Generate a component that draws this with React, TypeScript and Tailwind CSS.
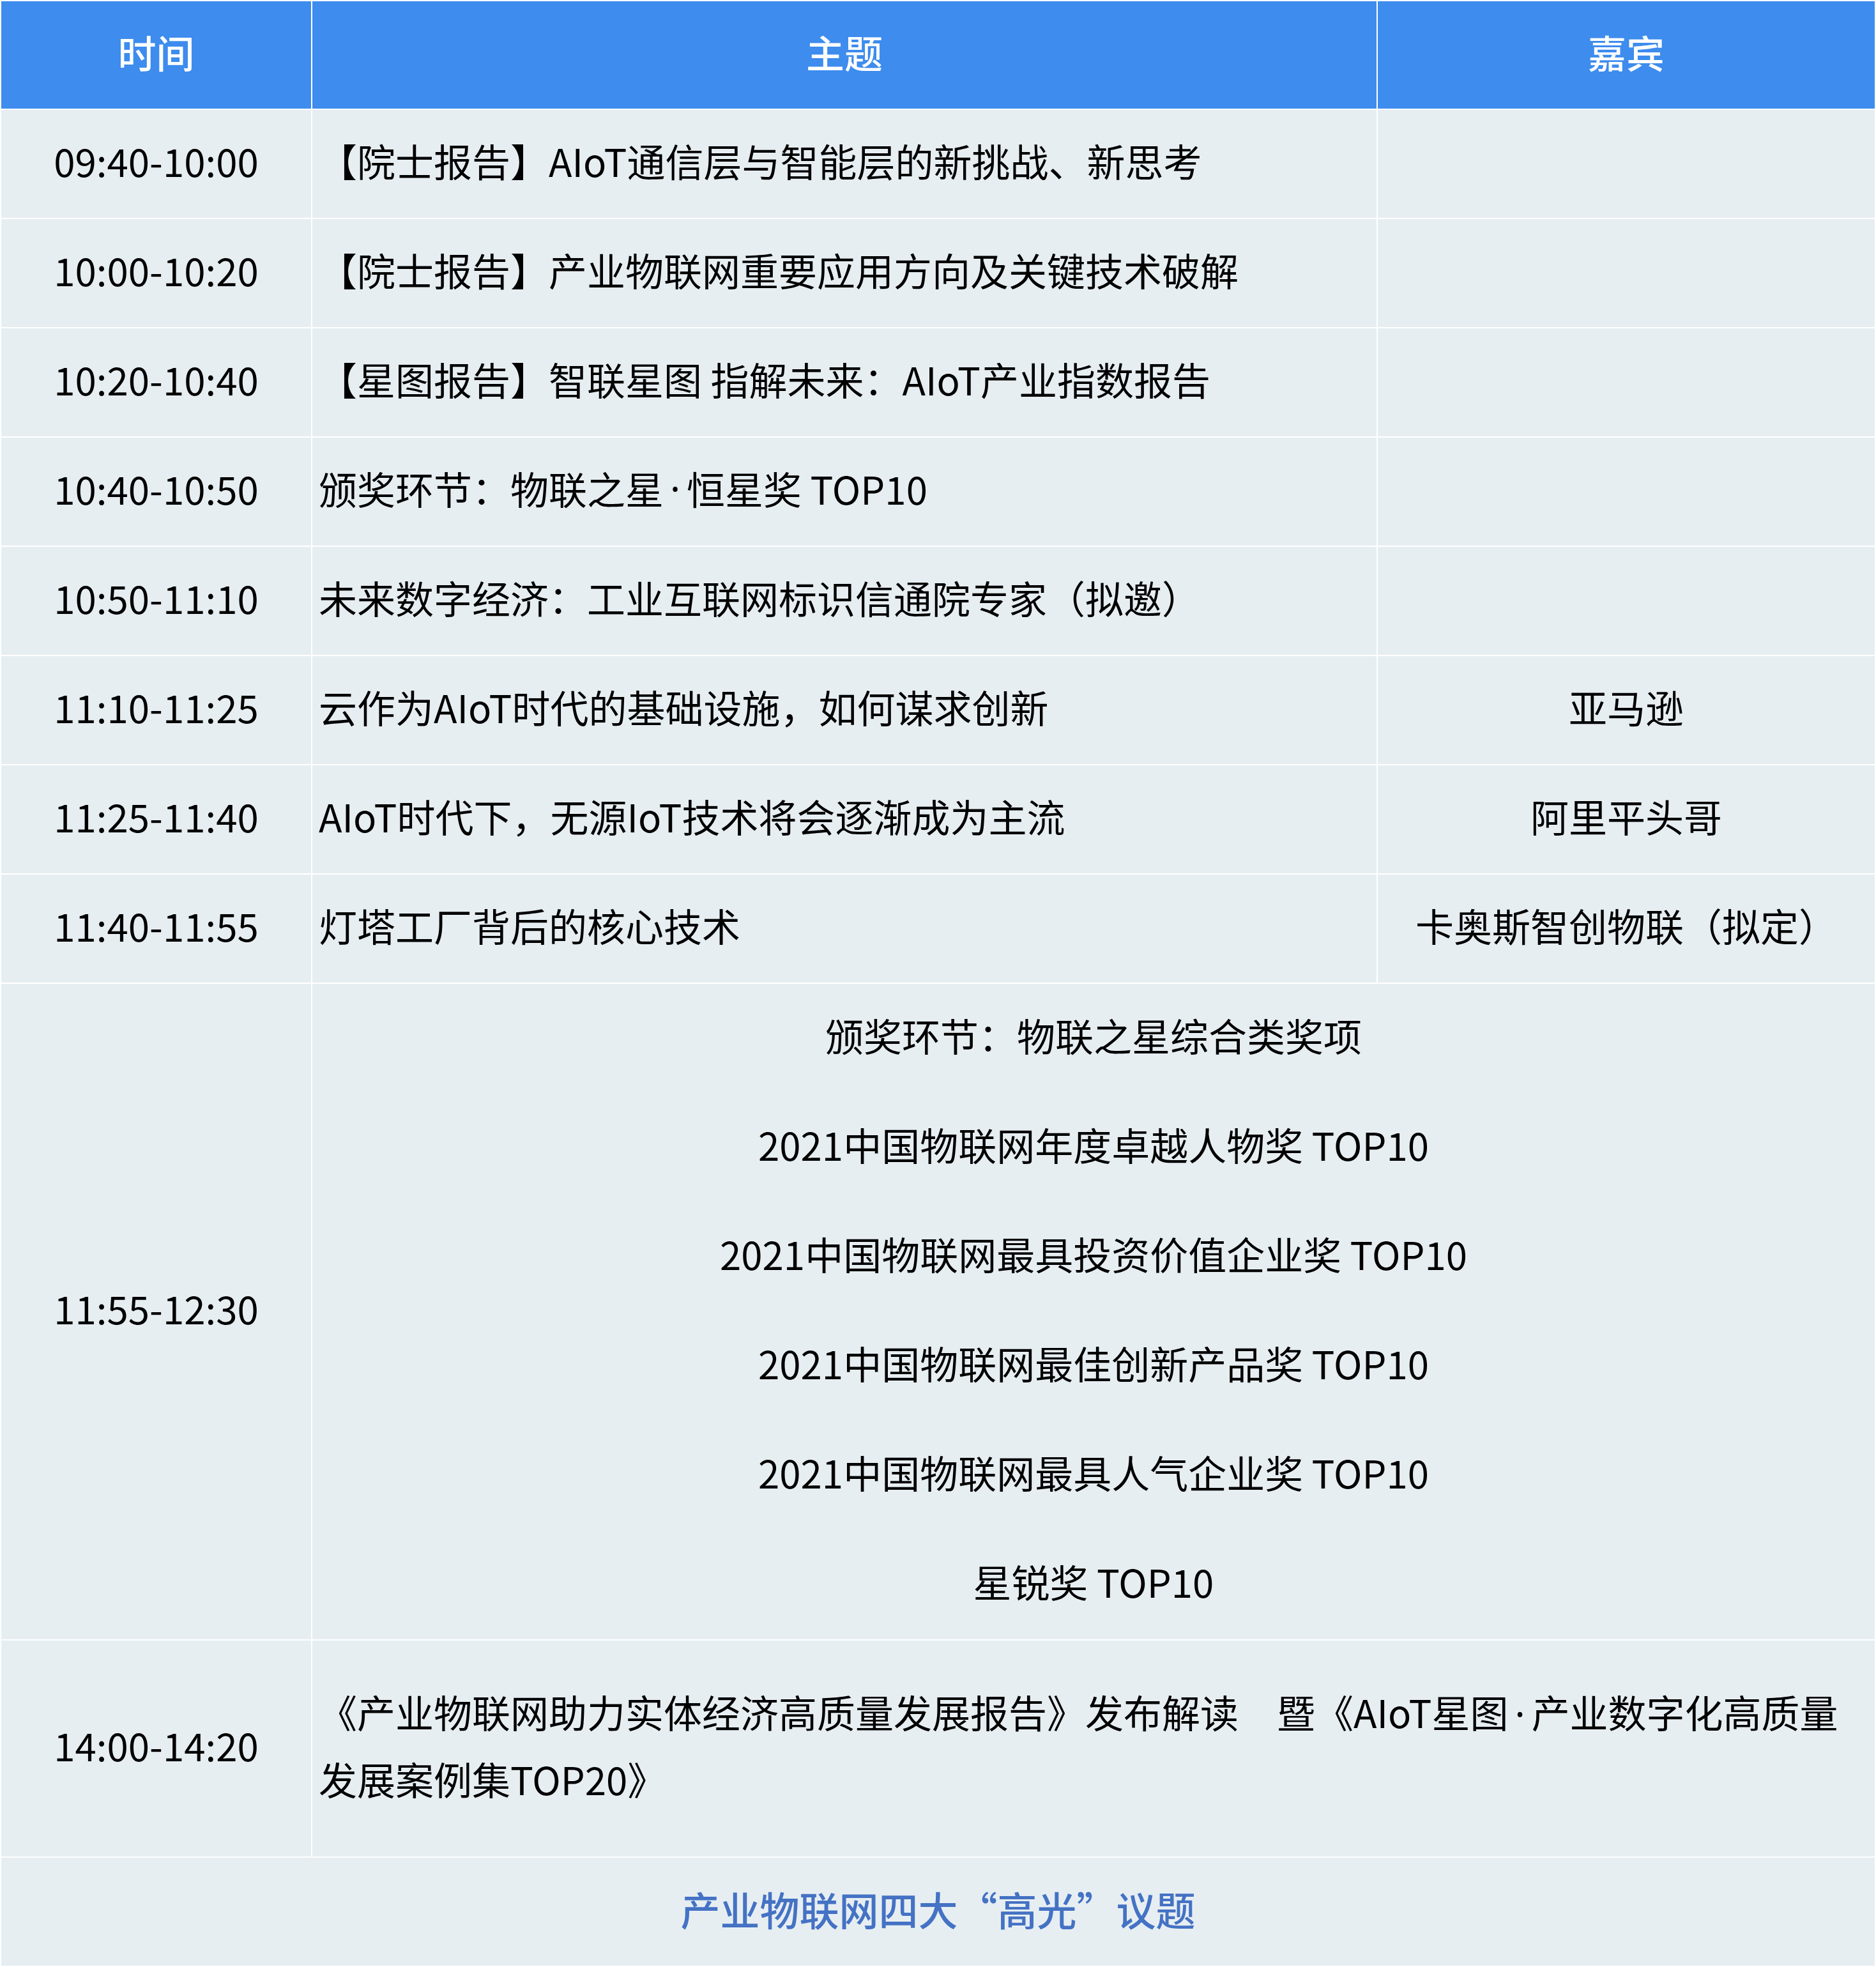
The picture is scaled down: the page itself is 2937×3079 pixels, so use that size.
const Dot = () => <span className="mx-[10px] font-['Noto_Sans',sans-serif]">·</span>;

const rows = [
  { time: '09:40-10:00', topic: <>【院士报告】AIoT通信层与智能层的新挑战、新思考</>, guest: '' },
  { time: '10:00-10:20', topic: <>【院士报告】产业物联网重要应用方向及关键技术破解</>, guest: '' },
  { time: '10:20-10:40', topic: <>【星图报告】智联星图 指解未来：AIoT产业指数报告</>, guest: '' },
  { time: '10:40-10:50', topic: <>颁奖环节：物联之星<Dot />恒星奖 TOP10</>, guest: '' },
  { time: '10:50-11:10', topic: <>未来数字经济：工业互联网标识信通院专家（拟邀）</>, guest: '' },
  { time: '11:10-11:25', topic: <>云作为AIoT时代的基础设施，如何谋求创新</>, guest: '亚马逊' },
  { time: '11:25-11:40', topic: <>AIoT时代下，无源IoT技术将会逐渐成为主流</>, guest: '阿里平头哥' },
  { time: '11:40-11:55', topic: <>灯塔工厂背后的核心技术</>, guest: '卡奥斯智创物联（拟定）' },
];

const awards = [
  '颁奖环节：物联之星综合类奖项',
  '2021中国物联网年度卓越人物奖 TOP10',
  '2021中国物联网最具投资价值企业奖 TOP10',
  '2021中国物联网最佳创新产品奖 TOP10',
  '2021中国物联网最具人气企业奖 TOP10',
  '星锐奖 TOP10',
];

export default function App() {
  return (
    <div className="w-[2937px] bg-white p-[2px] font-['Noto_Sans_CJK_SC','Noto_Sans',sans-serif] text-[60px] leading-[102px] text-black">
      <div className="grid grid-cols-[485px_1666px_1fr] gap-[2px]">
        {/* 表头 */}
        <div className="h-[168px] pb-[10px] bg-[#3d8cee] text-white font-medium flex items-center justify-center">时间</div>
        <div className="h-[168px] pb-[10px] bg-[#3d8cee] text-white font-medium flex items-center justify-center">主题</div>
        <div className="h-[168px] pb-[10px] bg-[#3d8cee] text-white font-medium flex items-center justify-center">嘉宾</div>

        {rows.map(row => (
          <div key={row.time} className="contents">
            <div className="h-[169px] pb-[12px] bg-[#e7eef2] flex items-center justify-center">{row.time}</div>
            <div className="h-[169px] pb-[12px] bg-[#e7eef2] flex items-center px-[10px] whitespace-nowrap">{row.topic}</div>
            <div className="h-[169px] pb-[12px] bg-[#e7eef2] flex items-center justify-center whitespace-nowrap">{row.guest}</div>
          </div>
        ))}

        {/* 颁奖环节 */}
        <div className="pb-[12px] bg-[#e7eef2] flex items-center justify-center">11:55-12:30</div>
        <div className="col-span-2 bg-[#e7eef2] flex flex-col">
          {awards.map(a => (
            <div key={a} className="h-[171px] pb-[12px] flex items-center justify-center whitespace-nowrap">{a}</div>
          ))}
        </div>

        {/* 报告发布 */}
        <div className="h-[338px] pb-[12px] bg-[#e7eef2] flex items-center justify-center">14:00-14:20</div>
        <div className="h-[338px] pb-[12px] col-span-2 bg-[#e7eef2] flex items-center px-[10px]">
          <p className="whitespace-nowrap">
            《产业物联网助力实体经济高质量发展报告》发布解读　暨《AIoT星图<Dot />产业数字化高质量
            <br />
            发展案例集TOP20》
          </p>
        </div>

        {/* 底部标题 */}
        <div className="h-[169px] pb-[10px] col-span-3 bg-[#e7eef2] flex items-center justify-center font-medium text-[62px] text-[#4472c4]">
          产业物联网四大“高光”议题
        </div>
      </div>
    </div>
  );
}
